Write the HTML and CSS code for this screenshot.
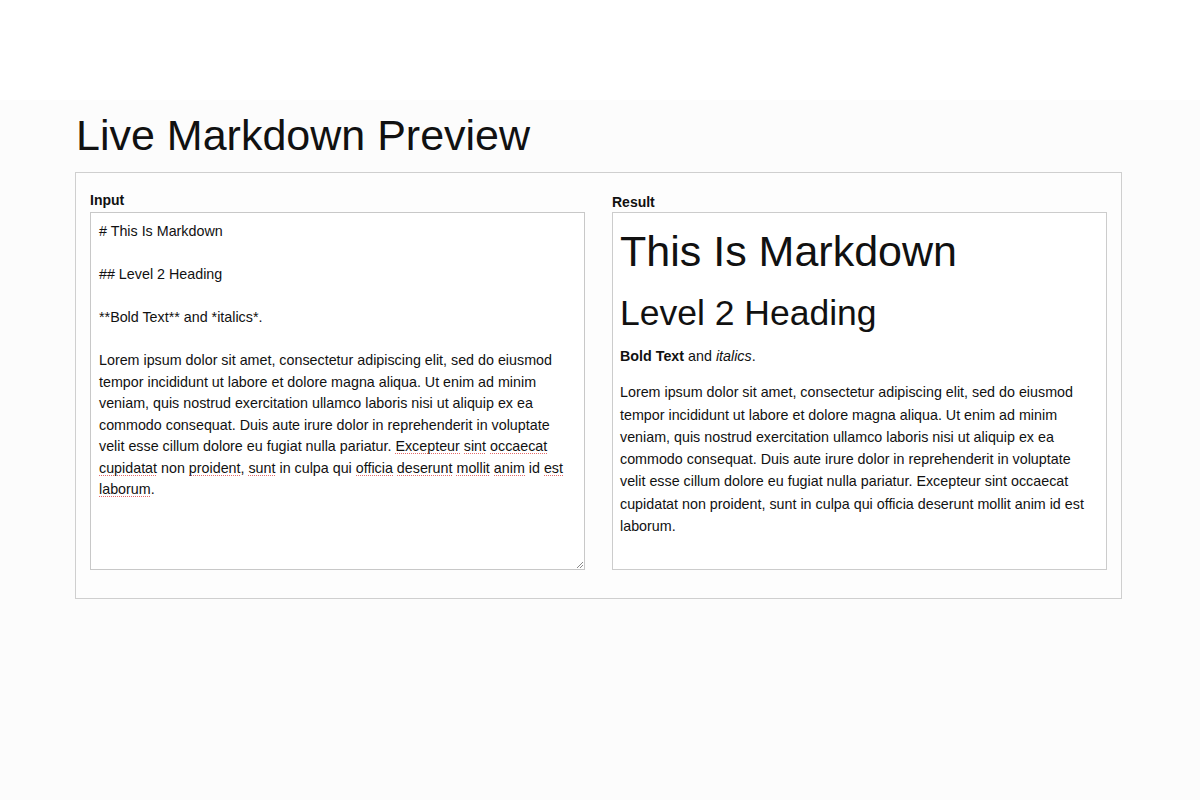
FILE: index.html
```html
<!DOCTYPE html>
<html lang="en">
<head>
<meta charset="utf-8">
<title>Live Markdown Preview</title>
<link rel="stylesheet" href="styles.css">
</head>
<body>
<div class="top-strip"></div>
<main class="page">
  <h1 class="page-title">Live Markdown Preview</h1>
  <section class="panel">
    <div class="col col-input">
      <label class="col-label label-input" for="md-input">Input</label>
      <div class="editor" id="md-input" role="textbox" aria-multiline="true" contenteditable="true" spellcheck="true"><div class="ln"># This Is Markdown</div><div class="ln">&nbsp;</div><div class="ln">## Level 2 Heading</div><div class="ln">&nbsp;</div><div class="ln">**Bold Text** and *italics*.</div><div class="ln">&nbsp;</div><div class="ln">Lorem ipsum dolor sit amet, consectetur adipiscing elit, sed do eiusmod tempor incididunt ut labore et dolore magna aliqua. Ut enim ad minim veniam, quis nostrud exercitation ullamco laboris nisi ut aliquip ex ea commodo consequat. Duis aute irure dolor in reprehenderit in voluptate velit esse cillum dolore eu fugiat nulla pariatur. <span class="sp">Excepteur</span> <span class="sp">sint</span> <span class="sp">occaecat</span> <span class="sp">cupidatat</span> non <span class="sp">proident</span>, <span class="sp">sunt</span> in culpa qui <span class="sp">officia</span> <span class="sp">deserunt</span> <span class="sp">mollit</span> <span class="sp">anim</span> id <span class="sp">est</span> <span class="sp">laborum</span>.</div></div>
      <svg class="grip" width="7" height="7" viewBox="0 0 7 7" aria-hidden="true"><path d="M1 7 L7 1 M4 7 L7 4" stroke="#8a8a8a" stroke-width="1" fill="none"/></svg>
    </div>
    <div class="col col-result">
      <div class="col-label label-result">Result</div>
      <div class="result">
        <h1 class="r-h1">This Is Markdown</h1>
        <h2 class="r-h2">Level 2 Heading</h2>
        <p class="r-p"><strong>Bold Text</strong> and <em>italics</em>.</p>
        <p class="r-p">Lorem ipsum dolor sit amet, consectetur adipiscing elit, sed do eiusmod tempor incididunt ut labore et dolore magna aliqua. Ut enim ad minim veniam, quis nostrud exercitation ullamco laboris nisi ut aliquip ex ea commodo consequat. Duis aute irure dolor in reprehenderit in voluptate velit esse cillum dolore eu fugiat nulla pariatur. Excepteur sint occaecat cupidatat non proident, sunt in culpa qui officia deserunt mollit anim id est laborum.</p>
      </div>
    </div>
  </section>
</main>
</body>
</html>
```
FILE: styles.css
```css
html, body {
  margin: 0;
  padding: 0;
}
body {
  background: #fcfcfc;
  font-family: "Liberation Sans", Arial, Helvetica, sans-serif;
  color: #111;
  min-height: 800px;
}
.top-strip {
  height: 100px;
  background: #ffffff;
}
.page {
  padding: 11px 78px 0 75px;
}
.page-title {
  margin: 0 0 12px 1px;
  font-size: 43px;
  font-weight: normal;
  line-height: 49px;
  color: #111;
}
.panel {
  width: 1017px;
  border: 1px solid #cfcfcf;
  padding: 19px 14px 28px 14px;
  display: flex;
  justify-content: space-between;
  background: #fdfdfd;
}
.col {
  width: 495px;
  display: flex;
  flex-direction: column;
  position: relative;
}
.col-label {
  display: block;
  font-weight: bold;
  font-size: 14px;
  line-height: 16px;
  color: #111;
}
.label-input {
  margin-bottom: 4px;
}
.label-result {
  padding-top: 2px;
  margin-bottom: 2px;
}
.editor {
  box-sizing: border-box;
  height: 358px;
  border: 1px solid #c8c8c8;
  background: #fff;
  padding: 8px 8px 6px;
  font-size: 14.3px;
  line-height: 21.5px;
  color: #111;
  outline: none;
  overflow: hidden;
}
.sp {
  background-image: linear-gradient(to right, #e46a6a 50%, transparent 50%);
  background-size: 2px 1px;
  background-repeat: repeat-x;
  background-position: 0 100%;
}
.grip {
  position: absolute;
  right: 2px;
  bottom: 2px;
}
.result {
  box-sizing: border-box;
  height: 358px;
  border: 1px solid #cccccc;
  background: #fff;
  padding: 14px 7px 0 7px;
  color: #111;
}
.r-h1 {
  margin: 0 0 17px;
  font-size: 43px;
  font-weight: normal;
  line-height: 49px;
}
.r-h2 {
  margin: 0 0 11px;
  font-size: 35.5px;
  font-weight: normal;
  line-height: 41px;
}
.r-p {
  margin: 0 0 14px;
  font-size: 14.3px;
  line-height: 22.3px;
}
```
